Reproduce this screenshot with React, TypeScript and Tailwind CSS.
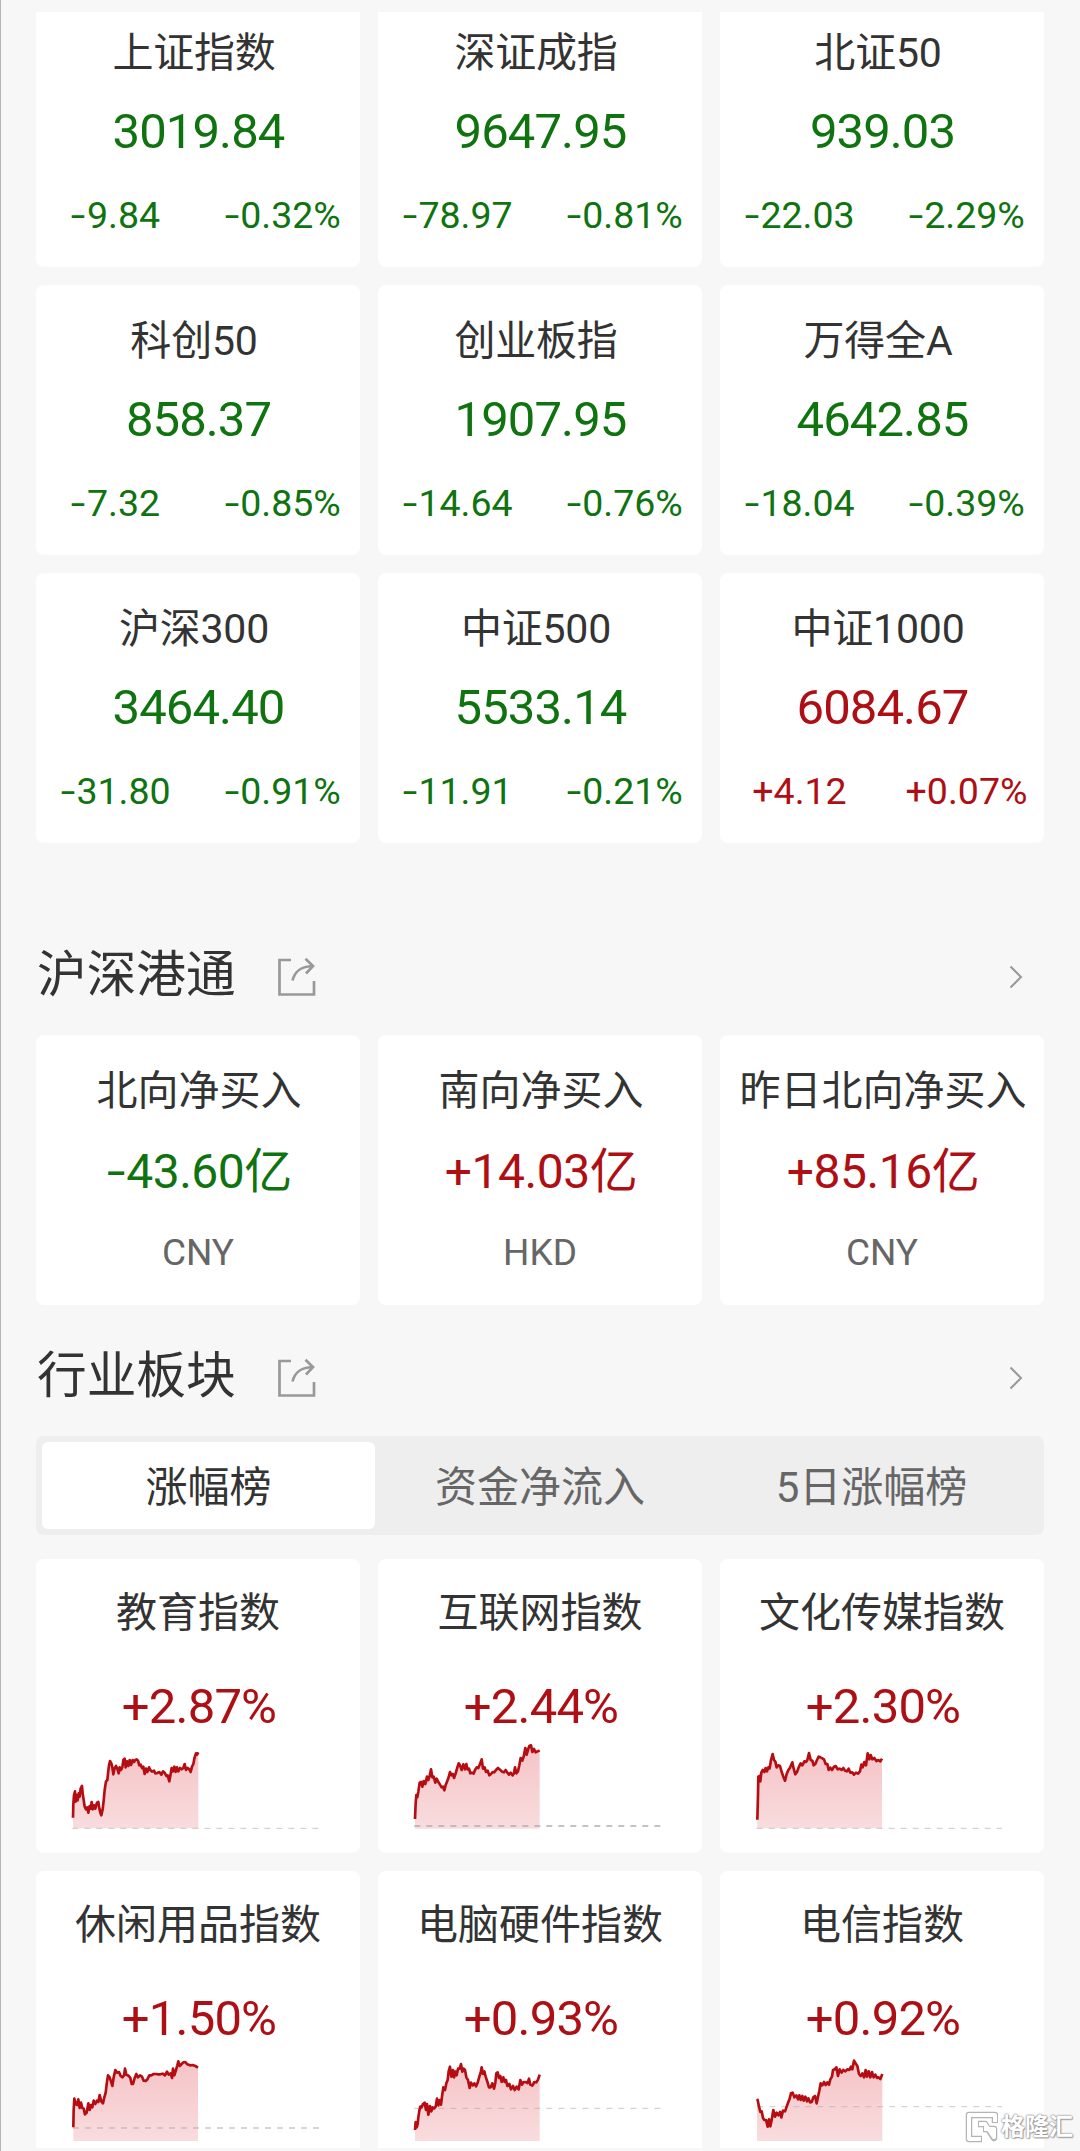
import React from "react";

const RED = "text-[#ae0f14]";
const GREEN = "text-[#0f730f]";

const indices = [
  ["上证指数", "3019.84", "-9.84", "-0.32%"],
  ["深证成指", "9647.95", "-78.97", "-0.81%"],
  ["北证50", "939.03", "-22.03", "-2.29%"],
  ["科创50", "858.37", "-7.32", "-0.85%"],
  ["创业板指", "1907.95", "-14.64", "-0.76%"],
  ["万得全A", "4642.85", "-18.04", "-0.39%"],
  ["沪深300", "3464.40", "-31.80", "-0.91%"],
  ["中证500", "5533.14", "-11.91", "-0.21%"],
  ["中证1000", "6084.67", "+4.12", "+0.07%"],
];

const flows = [
  ["北向净买入", "-43.60亿", "CNY"],
  ["南向净买入", "+14.03亿", "HKD"],
  ["昨日北向净买入", "+85.16亿", "CNY"],
];

type Sector = {
  name: string;
  change: string;
  view: string;
  base: number;
  bottom: number;
  dashFrom: number;
  dashWidth: number;
  points: string;
};

const sectors: Sector[] = [
  {
    name: "教育指数",
    change: "+2.87%",
    view: "18 165 972 330",
    base: 445,
    bottom: 445,
    dashFrom: 127,
    dashWidth: 2,
    points:
      "129,413 130,372 132,345 135,334 137,365 140,345 143,361 146,340 149,350 152,325 156,318 158,340 161,360 164,380 168,388 172,382 175,398 179,378 182,386 185,366 188,388 192,376 196,386 201,368 205,366 208,385 211,398 214,406 218,388 221,362 224,330 228,304 232,300 235,272 237,256 240,243 244,250 247,262 250,283 254,265 258,258 262,266 266,280 269,262 273,270 277,262 280,240 284,236 287,262 291,244 295,258 299,240 303,255 308,240 312,246 316,240 320,238 324,242 328,256 332,254 336,264 340,260 344,282 348,266 352,276 357,262 361,270 366,275 372,272 376,280 382,279 388,276 394,284 399,274 404,278 409,288 413,286 418,304 422,282 425,264 429,274 433,260 437,276 441,262 445,274 450,264 455,268 460,264 464,252 468,270 473,264 478,268 482,276 486,260 490,252 494,232 498,220 501,224 505,217",
  },
  {
    name: "互联网指数",
    change: "+2.44%",
    view: "24 165 972 330",
    base: 438,
    bottom: 446,
    dashFrom: 133,
    dashWidth: 4,
    points:
      "135,417 137,370 139,345 142,352 145,335 149,308 153,306 157,320 161,303 166,312 171,290 175,300 179,288 183,268 187,292 191,290 196,308 200,296 205,306 210,314 215,322 219,320 223,331 227,315 231,305 236,292 240,276 245,286 249,282 252,294 257,280 262,262 266,250 270,256 275,270 280,253 285,268 289,252 293,268 297,266 301,280 306,278 311,281 315,270 320,262 325,264 330,252 335,238 339,266 344,262 348,276 353,272 358,286 363,282 368,276 373,277 378,270 384,264 390,269 396,275 402,277 407,270 412,278 417,284 422,278 428,286 432,280 435,262 439,280 444,274 448,256 452,234 457,242 461,230 466,204 470,224 475,206 478,198 483,196 487,216 492,207 497,217 503,214 509,211",
  },
  {
    name: "文化传媒指数",
    change: "+2.30%",
    view: "30 165 972 330",
    base: 445,
    bottom: 445,
    dashFrom: 140,
    dashWidth: 2,
    points:
      "142,419 144,345 145,290 148,288 151,304 154,278 158,270 163,276 167,264 171,274 175,262 179,265 183,240 188,222 192,240 196,245 200,262 205,256 210,258 215,276 220,290 225,302 230,282 235,270 240,263 247,247 251,266 256,283 261,276 266,262 272,250 277,256 283,244 288,246 292,240 297,219 302,240 307,242 311,256 316,252 321,240 326,230 331,232 337,235 342,238 347,252 352,252 356,270 361,263 366,270 372,260 377,258 383,268 389,266 395,270 400,264 405,272 411,274 416,266 421,278 427,277 432,284 438,278 444,281 450,274 454,254 458,262 463,246 468,256 473,220 478,238 482,225 487,238 493,234 499,243 505,240 511,244 516,236",
  },
  {
    name: "休闲用品指数",
    change: "+1.50%",
    view: "18 171 972 330",
    base: 414,
    bottom: 453,
    dashFrom: 129,
    dashWidth: 3,
    points:
      "130,412 131,360 133,326 137,342 141,345 145,328 149,354 153,338 157,354 161,356 165,373 170,368 175,340 179,360 183,345 187,352 191,332 196,342 201,332 205,336 209,315 214,334 219,340 223,322 227,308 231,275 234,256 239,262 243,274 247,288 251,262 256,240 261,248 267,246 272,258 277,262 282,256 285,236 289,254 296,257 301,264 305,282 309,282 314,264 319,252 324,262 330,256 336,260 341,272 347,273 352,268 358,256 364,256 371,252 378,252 385,253 391,253 398,251 405,256 411,245 416,254 422,250 426,264 429,236 433,256 438,240 442,226 445,214 449,228 455,222 460,217 466,216 472,223 480,226 488,225 496,228 504,233",
  },
  {
    name: "电脑硬件指数",
    change: "+0.93%",
    view: "24 171 972 330",
    base: 355,
    bottom: 453,
    dashFrom: 133,
    dashWidth: 2,
    points:
      "135,420 137,396 140,412 143,402 145,382 148,362 151,350 155,352 159,342 164,338 168,360 171,342 175,374 180,348 184,364 188,352 192,356 197,350 201,326 205,346 209,330 213,344 216,320 220,292 225,300 229,280 233,270 236,244 240,230 244,260 249,240 252,262 256,245 260,256 264,236 269,236 273,222 277,245 281,236 285,240 289,262 294,270 299,294 303,278 308,286 313,280 318,289 323,278 328,260 332,248 335,232 339,252 343,244 347,260 352,275 357,292 362,292 367,280 372,296 376,278 379,250 383,247 387,264 391,258 395,276 400,262 404,276 408,270 412,288 418,282 423,298 429,288 434,300 440,290 446,298 451,270 456,284 461,276 467,276 473,279 477,266 481,284 487,287 493,276 499,277 504,269 509,254",
  },
  {
    name: "电信指数",
    change: "+0.92%",
    view: "30 171 972 330",
    base: 350,
    bottom: 453,
    dashFrom: 142,
    dashWidth: 2,
    points:
      "141,327 143,330 147,350 151,366 155,364 159,384 163,390 168,390 173,410 177,388 181,409 185,390 190,360 195,380 200,368 205,376 210,366 214,382 219,362 225,364 230,350 235,336 239,326 243,310 248,308 253,322 259,316 264,328 268,316 272,330 277,318 281,332 286,320 291,334 295,325 300,337 305,336 310,322 315,318 320,340 324,320 328,302 332,280 337,286 342,276 347,285 352,277 357,284 361,268 366,260 369,240 374,238 379,232 384,258 389,238 395,248 400,240 406,244 412,238 418,240 423,230 427,238 432,212 437,220 442,228 447,252 452,258 457,250 462,262 467,240 471,260 476,244 481,262 486,246 491,262 496,254 501,264 506,262 511,267 517,252",
  },
];

function toneOf(value: string) {
  return value.startsWith("+") ? RED : GREEN;
}

// Signed figure whose minus bar is widened to roughly the width of a plus sign.
function Signed({ value }: { value: string }) {
  if (!value.startsWith("-")) return <>{value}</>;
  return (
    <>
      <span className="mr-[0.030em] ml-[0.120em] inline-block origin-right scale-x-[1.4]">-</span>
      {value.slice(1)}
    </>
  );
}

function ShareIcon() {
  return (
    <svg width="40" height="40" viewBox="0 0 40 40" fill="none" stroke="#999" strokeWidth="2.700">
      <path d="M14 3H2.5V37.5H37V24" />
      <path d="M15.500 23.500C17.500 15.500 22 9.500 35.500 9" />
      <path d="M28.500 1.800L36 9L29 16.500" />
    </svg>
  );
}

function SectionHeader({ title }: { title: string }) {
  return (
    <div className="flex h-[60px] items-center pl-px">
      <h2 className="text-[49.700px] font-normal leading-[60px] text-[#333]">{title}</h2>
      <span className="ml-[41px] mt-1">
        <ShareIcon />
      </span>
      <svg className="mr-[21px] mt-1 ml-auto" width="14" height="24" viewBox="0 0 14 24" fill="none" stroke="#999" strokeWidth="2">
        <path d="M1.500 1.500L12 12L1.500 22.500" />
      </svg>
    </div>
  );
}

function Sparkline({ s }: { s: Sector }) {
  const xs = s.points.split(" ");
  const firstX = xs[0].split(",")[0];
  const lastX = xs[xs.length - 1].split(",")[0];
  const id = "fill-" + s.view.split(" ").slice(0, 2).join("-");
  return (
    <svg width="324" height="110" viewBox={s.view} className="block">
      <defs>
        <linearGradient id={id} x1="0" y1="0" x2="0" y2="1">
          <stop offset="0" stopColor="#f5c4c7" />
          <stop offset="1" stopColor="#f9dcde" />
        </linearGradient>
      </defs>
      <polygon fill={`url(#${id})`} points={`${firstX},${s.bottom} ${s.points} ${lastX},${s.bottom}`} />
      <line
        x1={s.dashFrom}
        x2="876"
        y1={s.base}
        y2={s.base}
        stroke="#b5adae"
        strokeWidth={s.dashWidth}
        strokeDasharray="18 18"
      />
      <polyline fill="none" stroke="#b50d12" strokeWidth="8" strokeLinejoin="round" points={s.points} />
    </svg>
  );
}

function Watermark() {
  return (
    <div className="absolute right-[7px] bottom-[7px] flex items-center gap-[3px]">
      <svg width="34" height="34" viewBox="0 0 34 34" fill="none">
        <g stroke="#b4b4b4" strokeWidth="6.500" strokeLinejoin="round">
          <path d="M31 13V5H5V29H18" />
          <path d="M14 14H21L30 28V19H19" />
        </g>
        <g stroke="#fff" strokeWidth="4" strokeLinejoin="round">
          <path d="M31 12V5H5V29H17" />
          <path d="M15 14H21L30 27V19H20" />
        </g>
      </svg>
      <span className="text-[24px] font-bold leading-[34px] text-white [text-shadow:0_0_2px_#888,0_0_2px_#999,1px_1px_1px_#aaa]">
        格隆汇
      </span>
    </div>
  );
}

export default function App() {
  return (
    <div className="relative h-[2151px] w-[1080px] overflow-hidden border-l border-[#b5b5b5] bg-[#f7f7f7] pt-3 pr-9 pl-[35px] font-['Roboto','Noto_Sans_CJK_SC',sans-serif] text-[#333]">
      <div className="flex h-[2136px] flex-col overflow-hidden">
        <div className="shrink-0 overflow-hidden">
          <section className="-mt-[15px] grid grid-cols-3 gap-[18px]">
            {indices.map(([name, price, diff, pct]) => (
              <div key={name} className="flex h-[270px] flex-col rounded-lg bg-white pt-[26px] text-center">
                <div className="mr-2 text-[41px] leading-[60px] tracking-[-0.200px]">{name}</div>
                <div className={`mt-[19px] pl-px text-[49px] leading-[60px] tracking-[-0.900px] ${toneOf(diff)}`}>
                  {price}
                </div>
                <div className={`mt-[23px] flex justify-between text-[37.500px] leading-[60px] ${toneOf(diff)}`}>
                  <span className="w-[159px]">
                    <Signed value={diff} />
                  </span>
                  <span className="w-[155px]">
                    <Signed value={pct} />
                  </span>
                </div>
              </div>
            ))}
          </section>
        </div>

        <div className="mt-[102px] shrink-0">
          <SectionHeader title="沪深港通" />
        </div>
        <section className="mt-[30px] grid shrink-0 grid-cols-3 gap-[18px]">
          {flows.map(([name, amount, unit]) => (
            <div key={name} className="flex h-[270px] flex-col rounded-lg bg-white pt-[26px] text-center">
              <div className="pl-0.5 text-[41px] leading-[60px] whitespace-nowrap">{name}</div>
              <div className={`mt-[21px] pl-0.5 text-[48px] leading-[60px] tracking-[-0.500px] ${toneOf(amount)}`}>
                <Signed value={amount} />
              </div>
              <div className="mt-[21px] text-[37px] leading-[60px] text-[#666]">{unit}</div>
            </div>
          ))}
        </section>

        <div className="mt-[41px] shrink-0">
          <SectionHeader title="行业板块" />
        </div>
        <div className="mt-[30px] grid h-[99px] shrink-0 grid-cols-[333px_1fr_333px] rounded-lg bg-[#eee] px-[6px] py-[6px] text-center text-[42px] leading-[82px] text-[#666]">
          <div className="rounded-md bg-white pt-[5px] text-[#333]">涨幅榜</div>
          <div className="pt-[5px]">资金净流入</div>
          <div className="pt-[5px]">5日涨幅榜</div>
        </div>
        <section className="mt-6 grid shrink-0 grid-cols-3 gap-[18px]">
          {sectors.map((s) => (
            <div key={s.name} className="h-[294px] rounded-lg bg-white pt-6 text-center">
              <div className="text-[41px] leading-[60px]">{s.name}</div>
              <div className="mt-[34px] pl-0.5 text-[49px] leading-[60px] tracking-[-0.800px] text-[#ae0f14]">
                {s.change}
              </div>
              <div className="-mt-0.5">
                <Sparkline s={s} />
              </div>
            </div>
          ))}
        </section>
      </div>
      <Watermark />
    </div>
  );
}
